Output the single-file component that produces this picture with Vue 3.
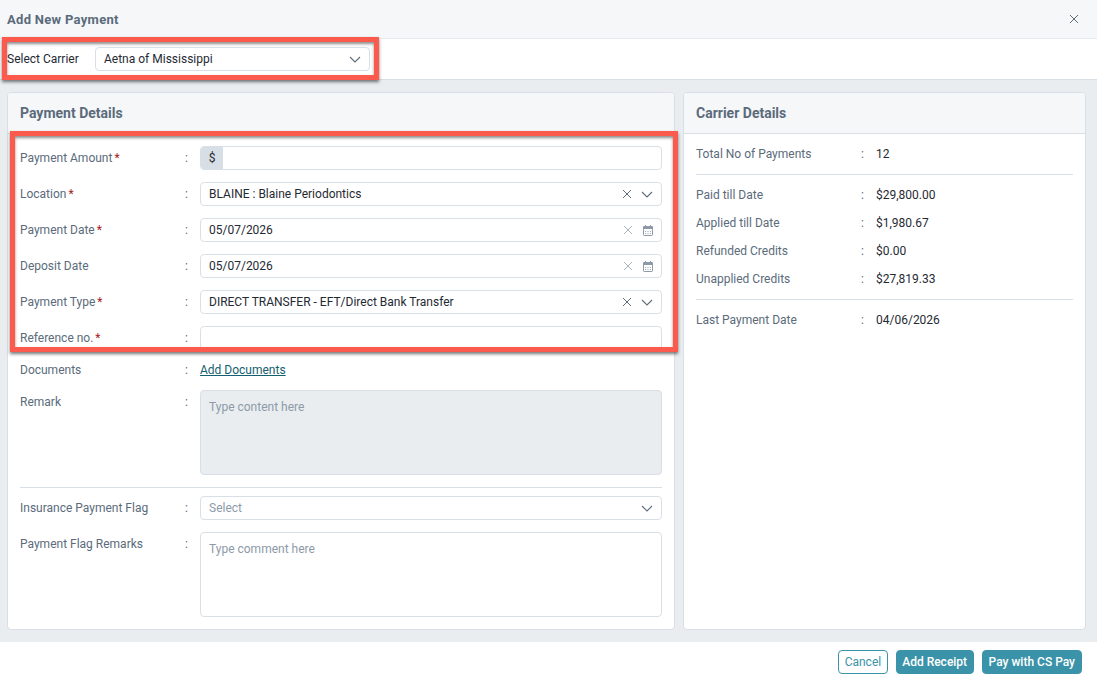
<script setup>
const clearIcon = 'M1 1l8 8M9 1l-8 8';
const carrierGroups = [
  [{ label: 'Total No of Payments', value: '12' }],
  [
    { label: 'Paid till Date', value: '$29,800.00' },
    { label: 'Applied till Date', value: '$1,980.67' },
    { label: 'Refunded Credits', value: '$0.00' },
    { label: 'Unapplied Credits', value: '$27,819.33' },
  ],
  [{ label: 'Last Payment Date', value: '04/06/2026' }],
];
</script>
<template>
  <div class="modal">
    <header class="modal__head">
      <h1>Add New Payment</h1>
      <svg class="modal__close" width="10" height="10" viewBox="0 0 10 10"><path :d="clearIcon" /></svg>
    </header>
    <div class="carrier">
      <span class="carrier__label">Select Carrier</span>
      <div class="control carrier__select">
        <span class="control__text">Aetna of Mississippi</span>
        <svg class="chev" width="12" height="7" viewBox="0 0 12 7"><path d="M1 1l5 5 5-5" /></svg>
      </div>
    </div>
    <main class="modal__body">
      <section class="card card--left">
        <h2 class="card__title">Payment Details</h2>
        <div class="form">
          <div class="row">
            <label>Payment Amount<i>*</i></label><b>:</b>
            <div class="control control--amount"><span class="addon">$</span></div>
          </div>
          <div class="row">
            <label>Location<i>*</i></label><b>:</b>
            <div class="control">
              <span class="control__text">BLAINE : Blaine Periodontics</span>
              <svg class="clear" width="10" height="10" viewBox="0 0 10 10"><path :d="clearIcon" /></svg>
              <svg class="chev" width="12" height="7" viewBox="0 0 12 7"><path d="M1 1l5 5 5-5" /></svg>
            </div>
          </div>
          <div class="row" v-for="d in [{ label: 'Payment Date', req: true }, { label: 'Deposit Date', req: false }]" :key="d.label">
            <label>{{ d.label }}<i v-if="d.req">*</i></label><b>:</b>
            <div class="control">
              <span class="control__text">05/07/2026</span>
              <svg class="clear clear--light" width="10" height="10" viewBox="0 0 10 10"><path :d="clearIcon" /></svg>
              <svg class="cal" width="10" height="11" viewBox="0 0 10 11">
                <path class="cal__fill" d="M1 1h1V0h1v1h4V0h1v1h1a1 1 0 0 1 1 1v2H0V2a1 1 0 0 1 1-1z" />
                <rect x="0.5" y="3.5" width="9" height="7" rx="0.7" />
                <path class="cal__dots" d="M2 6h1.2v1H2zM4.4 6h1.2v1H4.4zM6.8 6H8v1H6.8zM2 8h1.2v1H2zM4.4 8h1.2v1H4.4zM6.8 8H8v1H6.8z" />
              </svg>
            </div>
          </div>
          <div class="row">
            <label>Payment Type<i>*</i></label><b>:</b>
            <div class="control">
              <span class="control__text">DIRECT TRANSFER - EFT/Direct Bank Transfer</span>
              <svg class="clear" width="10" height="10" viewBox="0 0 10 10"><path :d="clearIcon" /></svg>
              <svg class="chev" width="12" height="7" viewBox="0 0 12 7"><path d="M1 1l5 5 5-5" /></svg>
            </div>
          </div>
          <div class="row">
            <label>Reference no.<i>*</i></label><b>:</b>
            <div class="control"></div>
          </div>
          <div class="row row--tight">
            <label>Documents</label><b>:</b>
            <a class="link">Add Documents</a>
          </div>
          <div class="row row--top row--tight">
            <label>Remark</label><b>:</b>
            <div class="area area--disabled">Type content here</div>
          </div>
          <hr class="rule" />
          <div class="row row--tight">
            <label>Insurance Payment Flag</label><b>:</b>
            <div class="control">
              <span class="control__text control__text--muted">Select</span>
              <svg class="chev" width="12" height="7" viewBox="0 0 12 7"><path d="M1 1l5 5 5-5" /></svg>
            </div>
          </div>
          <div class="row row--top">
            <label>Payment Flag Remarks</label><b>:</b>
            <div class="area">Type comment here</div>
          </div>
        </div>
      </section>
      <section class="card card--right">
        <h2 class="card__title">Carrier Details</h2>
        <div class="stats">
          <div class="stats__group" v-for="(group, i) in carrierGroups" :key="i">
            <div class="stat" v-for="item in group" :key="item.label">
              <span class="stat__label">{{ item.label }}</span>
              <b>:</b>
              <span class="stat__value">{{ item.value }}</span>
            </div>
          </div>
        </div>
      </section>
    </main>
    <footer class="modal__foot">
      <button class="btn btn--ghost">Cancel</button>
      <button class="btn">Add Receipt</button>
      <button class="btn btn--wide">Pay with CS Pay</button>
    </footer>
    <div class="mark mark--carrier"></div>
    <div class="mark mark--form"></div>
  </div>
</template>
<style scoped>
.modal {
  position: relative;
  width: 1097px;
  height: 682px;
  display: flex;
  flex-direction: column;
  font-family: Roboto, 'Liberation Sans', sans-serif;
  font-size: 12px;
  color: #1f2a33;
  background: #fff;
  overflow: hidden;
}
.modal__head {
  height: 39px;
  box-sizing: border-box;
  flex: none;
  display: flex;
  align-items: center;
  justify-content: space-between;
  padding: 0 18px 0 7px;
  background: #f5f7f9;
  border-bottom: 1px solid #e6eaef;
}
.modal__head h1 {
  margin: 0;
  font-size: 13px;
  font-weight: 700;
  letter-spacing: 0.3px;
  color: #5b6b7b;
}
.modal__close path {
  fill: none;
  stroke: #5f6d7b;
  stroke-width: 1;
}
.carrier {
  height: 41px;
  box-sizing: border-box;
  flex: none;
  display: flex;
  align-items: center;
  padding-left: 7px;
  border-bottom: 1px solid #d9dfe6;
}
.carrier__label {
  width: 88px;
  color: #1f2a33;
}
.modal__body {
  flex: 1;
  min-height: 0;
  display: flex;
  gap: 8px;
  padding: 12px 11px 12px 7px;
  background: #e9edf0;
}
.card {
  box-sizing: border-box;
  background: #fff;
  border: 1px solid #d9dfe6;
  border-radius: 4px;
  overflow: hidden;
}
.card--left {
  width: 668px;
  flex: none;
}
.card--right {
  flex: 1;
}
.card__title {
  margin: 0;
  height: 41px;
  box-sizing: border-box;
  display: flex;
  align-items: center;
  padding: 0 12px;
  font-size: 14px;
  font-weight: 700;
  color: #5b6b7b;
  background: #f5f7f9;
  border-bottom: 1px solid #d9dfe6;
}
.form {
  padding: 12px;
  display: flex;
  flex-direction: column;
  gap: 12px;
}
.row {
  display: flex;
  align-items: center;
  min-height: 24px;
}
.row--tight {
  margin-top: -4px;
}
.row--top {
  align-items: flex-start;
}
.row--top label,
.row--top b {
  line-height: 24px;
}
.row label {
  width: 165px;
  flex: none;
  color: #5b6b7b;
}
.row label i {
  color: #a51c24;
  font-style: normal;
  margin-left: 2px;
}
b {
  font-weight: 400;
  color: #5b6b7b;
}
.row b {
  width: 15px;
  flex: none;
}
.control {
  flex: 1;
  height: 24px;
  box-sizing: border-box;
  display: flex;
  align-items: center;
  padding: 0 8px;
  border: 1px solid #d9dfe6;
  border-radius: 4px;
  background: #fff;
}
.carrier__select {
  flex: none;
  width: 275px;
}
.control--amount {
  padding: 0;
  overflow: hidden;
}
.addon {
  width: 22px;
  height: 100%;
  display: flex;
  align-items: center;
  justify-content: center;
  background: #d8dee6;
}
.control__text {
  flex: 1;
  white-space: nowrap;
}
.control__text--muted {
  color: #8d9aa8;
}
.clear path {
  fill: none;
  stroke: #5f6d7b;
  stroke-width: 1;
}
.clear--light path {
  stroke: #a9b4bf;
}
.chev {
  margin-left: 9px;
}
.chev path {
  fill: none;
  stroke: #5f6d7b;
  stroke-width: 1.1;
}
.cal {
  margin-left: 10px;
}
.cal rect {
  fill: none;
  stroke: #8d9aa8;
}
.cal__fill {
  fill: #8d9aa8;
}
.cal__dots {
  fill: #a9b4bf;
}
.link {
  color: #13606f;
  text-decoration: underline;
}
.area {
  flex: 1;
  height: 85px;
  box-sizing: border-box;
  padding: 9px 8px;
  border: 1px solid #d9dfe6;
  border-radius: 4px;
  color: #8d9aa8;
}
.area--disabled {
  background: #e9edf0;
}
.rule {
  width: 100%;
  margin: 0;
  border: 0;
  border-top: 1px solid #d9dfe6;
}
.stats {
  padding: 0 12px;
}
.stats__group {
  padding: 6px 0;
  border-bottom: 1px solid #d9dfe6;
}
.stats__group:last-child {
  border-bottom: 0;
}
.stat {
  height: 28px;
  display: flex;
  align-items: center;
}
.stat__label {
  width: 165px;
  color: #5b6b7b;
}
.stat b {
  width: 15px;
}
.stat__value {
  color: #1f2a33;
}
.modal__foot {
  height: 40px;
  flex: none;
  display: flex;
  align-items: center;
  justify-content: flex-end;
  gap: 8px;
  padding: 0 15px;
}
.btn {
  height: 24px;
  padding: 0 5.5px;
  border: 1px solid #3a93a8;
  border-radius: 4px;
  background: #3a93a8;
  color: #fff;
  font: inherit;
  font-weight: 500;
}
.btn--wide {
  padding: 0 6px;
}
.btn--ghost {
  background: #fff;
  color: #3a93a8;
  font-weight: 400;
}
.mark {
  position: absolute;
  box-sizing: border-box;
  border: 5px solid #fb5a4c;
  box-shadow: 0 2px 3px rgba(30, 30, 30, 0.6), inset 0 2px 3px rgba(30, 30, 30, 0.5);
  pointer-events: none;
}
.mark--carrier {
  left: 2px;
  top: 37px;
  width: 377px;
  height: 43px;
}
.mark--form {
  left: 10px;
  top: 131px;
  width: 668px;
  height: 221px;
}
</style>
